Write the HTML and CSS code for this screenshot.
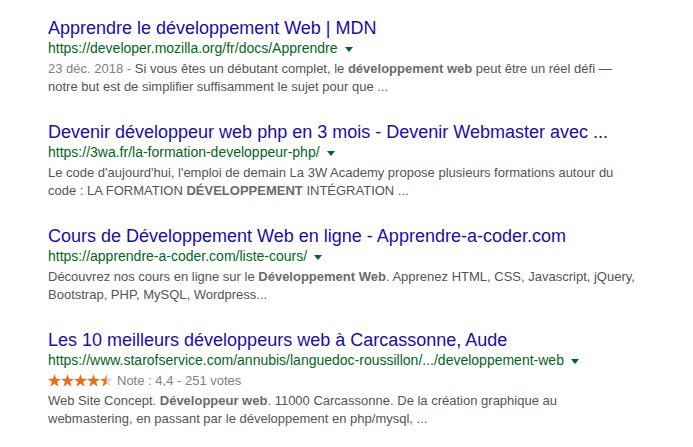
FILE: index.html
```html
<!DOCTYPE html>
<html lang="fr">
<head>
<meta charset="utf-8">
<title>Résultats</title>
<link rel="stylesheet" href="styles.css">
</head>
<body>
<div class="results">
  <div class="g">
    <a class="title" href="#">Apprendre le développement Web | MDN</a>
    <div class="url"><cite>https://developer.mozilla.org/fr/docs/Apprendre</cite><span class="arrow"></span></div>
    <div class="snippet"><span class="date">23 déc. 2018 - </span>Si vous êtes un débutant complet, le <b>développement web</b> peut être un réel défi —<br>notre but est de simplifier suffisamment le sujet pour que ...</div>
  </div>
  <div class="g">
    <a class="title" href="#">Devenir développeur web php en 3 mois - Devenir Webmaster avec ...</a>
    <div class="url"><cite>https://3wa.fr/la-formation-developpeur-php/</cite><span class="arrow"></span></div>
    <div class="snippet">Le code d'aujourd'hui, l'emploi de demain La 3W Academy propose plusieurs formations autour du<br>code : LA FORMATION <b>DÉVELOPPEMENT</b> INTÉGRATION ...</div>
  </div>
  <div class="g">
    <a class="title" href="#">Cours de Développement Web en ligne - Apprendre-a-coder.com</a>
    <div class="url"><cite>https://apprendre-a-coder.com/liste-cours/</cite><span class="arrow"></span></div>
    <div class="snippet">Découvrez nos cours en ligne sur le <b>Développement Web</b>. Apprenez HTML, CSS, Javascript, jQuery,<br>Bootstrap, PHP, MySQL, Wordpress...</div>
  </div>
  <div class="g">
    <a class="title" href="#">Les 10 meilleurs développeurs web à Carcassonne, Aude</a>
    <div class="url"><cite>https://www.starofservice.com/annubis/languedoc-roussillon/.../developpement-web</cite><span class="arrow"></span></div>
    <div class="rating">
      <svg class="stars" width="65" height="13" viewBox="0 0 65 13" aria-hidden="true">
        <defs>
          <polygon id="star" points="6.5,0.2 8.09,4.82 12.97,4.9 9.07,7.83 10.5,12.5 6.5,9.7 2.5,12.5 3.93,7.83 0.03,4.9 4.91,4.82"/>
          <clipPath id="fill"><rect x="0" y="0" width="58.5" height="13"/></clipPath>
        </defs>
        <g fill="#dadada">
          <use href="#star" x="0"/><use href="#star" x="13"/><use href="#star" x="26"/><use href="#star" x="39"/><use href="#star" x="52"/>
        </g>
        <g fill="#e7711b" clip-path="url(#fill)">
          <use href="#star" x="0"/><use href="#star" x="13"/><use href="#star" x="26"/><use href="#star" x="39"/><use href="#star" x="52"/>
        </g>
      </svg>
      <span class="note">Note : 4,4 - 251 votes</span>
    </div>
    <div class="snippet">Web Site Concept. <b>Développeur web</b>. 11000 Carcassonne. De la création graphique au<br>webmastering, en passant par le développement en php/mysql, ...</div>
  </div>
</div>
</body>
</html>
```
FILE: styles.css
```css
html, body {
  margin: 0;
  padding: 0;
  background: #ffffff;
}
body {
  font-family: "Liberation Sans", Arial, sans-serif;
}
.results {
  display: flex;
  flex-direction: column;
  gap: 25px;
  padding: 17px 0 0 48px;
}
.g {
  display: flex;
  flex-direction: column;
  align-items: flex-start;
}
.title {
  font-size: 18px;
  line-height: 22px;
  color: #1a0dab;
  text-decoration: none;
  white-space: nowrap;
}
.url {
  display: flex;
  align-items: center;
  height: 19px;
  font-size: 14px;
  line-height: 19px;
  white-space: nowrap;
}
.url cite {
  font-style: normal;
  color: #006621;
}
.arrow {
  width: 0;
  height: 0;
  margin-left: 7px;
  margin-top: 2px;
  border-left: 4.5px solid transparent;
  border-right: 4.5px solid transparent;
  border-top: 5px solid #006621;
}
.snippet {
  margin-top: 2px;
  font-size: 13px;
  line-height: 18px;
  color: #545454;
  white-space: nowrap;
}
.snippet b {
  color: #6a6a6a;
}
.date {
  color: #808080;
}
.rating {
  display: flex;
  align-items: center;
  margin-top: 2px;
  height: 18px;
  font-size: 13px;
  line-height: 18px;
  color: #808080;
}
.stars {
  display: block;
  margin-right: 4px;
  margin-top: -1px;
}
.note {
  color: #808080;
}
```
